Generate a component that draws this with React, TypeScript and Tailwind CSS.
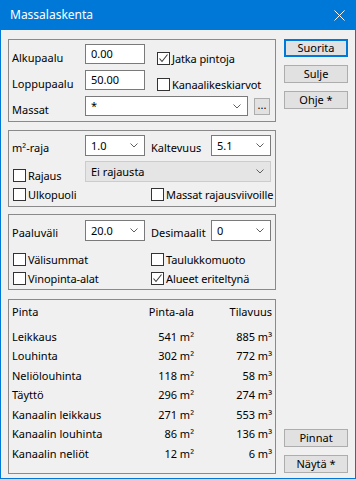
import React from "react";

const font = { fontFamily: '"Noto Sans", "Segoe UI", sans-serif' };

function Check({ checked = false }: { checked?: boolean }) {
  return (
    <span className="w-[13px] h-[13px] shrink-0 border border-[#333333] bg-white flex items-center justify-center">
      {checked && (
        <svg width="11" height="11" viewBox="0 0 11 11">
          <path d="M1.5 5.5 L4 8.5 L9.5 1.5" fill="none" stroke="#3c3c3c" strokeWidth="1.1" />
        </svg>
      )}
    </span>
  );
}

function CheckRow({ label, checked, w }: { label: string; checked?: boolean; w?: string }) {
  return (
    <div className={`flex items-center gap-[2px] h-[13px] whitespace-nowrap ${w ?? ""}`}>
      <Check checked={checked} />
      <span className="leading-[13px] tracking-[-0.1px]">{label}</span>
    </div>
  );
}

function Chevron() {
  return (
    <svg width="8" height="5" viewBox="0 0 8 5" className="shrink-0">
      <path d="M0.5 0.5 L4 4 L7.5 0.5" fill="none" stroke="#606060" strokeWidth="1" />
    </svg>
  );
}

function Combo({ value, w, disabled }: { value: string; w: string; disabled?: boolean }) {
  return (
    <div
      className={`${w} h-[21px] border flex items-center pl-[5px] pr-[6px] ${
        disabled ? "bg-[#e5e5e5] border-[#cccccc]" : "bg-white border-[#7a7a7a]"
      }`}
    >
      <span className="flex-1 leading-[14px]">{value}</span>
      <Chevron />
    </div>
  );
}

function Btn({ label, def }: { label: string; def?: boolean }) {
  return (
    <div
      className={`w-[64px] h-[18px] bg-[#e1e1e1] flex items-center justify-center leading-[14px] ${
        def ? "border-2 border-[#0078d7]" : "border border-[#adadad]"
      }`}
    >
      {label}
    </div>
  );
}

const rows: [string, string, string][] = [
  ["Leikkaus", "541 m²", "885 m³"],
  ["Louhinta", "302 m²", "772 m³"],
  ["Neliölouhinta", "118 m²", "58 m³"],
  ["Täyttö", "296 m²", "274 m³"],
  ["Kanaalin leikkaus", "271 m²", "553 m³"],
  ["Kanaalin louhinta", "86 m²", "136 m³"],
  ["Kanaalin neliöt", "12 m²", "6 m³"],
];

export default function App() {
  return (
    <div
      className="w-[356px] h-[479px] bg-[#0078d7] px-[1px] pb-[1px] flex flex-col text-[11px] text-black"
      style={font}
    >
      <div className="h-[30px] shrink-0 flex items-center justify-between pl-[9px] pr-[10px] text-white text-[12px]">
        <span>Massalaskenta</span>
        <svg width="11" height="11" viewBox="0 0 11 11">
          <path d="M0.5 0.5 L10.5 10.5 M10.5 0.5 L0.5 10.5" stroke="white" strokeWidth="1" />
        </svg>
      </div>

      <div className="flex-1 bg-[#f0f0f0] flex pl-[7px] pt-[9px] pb-[4px] pr-[7px] gap-[8px]">
        <div className="w-[268px] flex flex-col">
          {/* group 1 */}
          <div className="h-[83px] border border-[#8a8a8a] pt-[4px] pl-[3px] flex flex-col gap-[6px]">
            <div className="flex items-center h-[20px]">
              <span className="w-[73px] mt-[8px]">Alkupaalu</span>
              <div className="w-[60px] h-[20px] border border-[#7a7a7a] bg-white pl-[5px] leading-[17px]">0.00</div>
              <div className="ml-[12px] mt-[8px]">
                <CheckRow label="Jatka pintoja" checked />
              </div>
            </div>
            <div className="flex items-center h-[20px]">
              <span className="w-[73px] mt-[8px]">Loppupaalu</span>
              <div className="w-[60px] h-[20px] border border-[#7a7a7a] bg-white pl-[5px] leading-[17px]">50.00</div>
              <div className="ml-[12px] mt-[8px]">
                <CheckRow label="Kanaalikeskiarvot" />
              </div>
            </div>
            <div className="flex items-center h-[20px]">
              <span className="w-[73px] mt-[8px]">Massat</span>
              <div className="w-[163px] h-[20px] border border-[#7a7a7a] bg-white flex items-center pl-[5px] pr-[6px]">
                <span className="flex-1 leading-[14px]">*</span>
                <Chevron />
              </div>
              <div className="ml-[6px] w-[16px] h-[17px] border border-[#adadad] bg-[#e1e1e1] flex items-center justify-center leading-[10px] pb-[3px]">
                ...
              </div>
            </div>
          </div>

          {/* group 2 */}
          <div className="mt-[8px] h-[77px] border border-[#8a8a8a] pt-[4px] pl-[3px] flex flex-col">
            <div className="flex items-center h-[21px]">
              <span className="w-[73px] mt-[6px]">m²-raja</span>
              <Combo value="1.0" w="w-[60px]" />
              <span className="ml-[6px] w-[60px] mt-[6px]">Kaltevuus</span>
              <Combo value="5.1" w="w-[60px]" />
            </div>
            <div className="flex items-center h-[21px] mt-[5px]">
              <div className="w-[73px] pl-[1px] mt-[7px]">
                <CheckRow label="Rajaus" />
              </div>
              <Combo value="Ei rajausta" w="w-[186px]" disabled />
            </div>
            <div className="flex items-center h-[13px] mt-[6px]">
              <div className="w-[139px] pl-[1px]">
                <CheckRow label="Ulkopuoli" />
              </div>
              <CheckRow label="Massat rajausviivoille" />
            </div>
          </div>

          {/* group 3 */}
          <div className="mt-[7px] h-[76px] border border-[#8a8a8a] pt-[5px] pl-[3px] flex flex-col">
            <div className="flex items-center h-[21px]">
              <span className="w-[73px] mt-[6px]">Paaluväli</span>
              <Combo value="20.0" w="w-[60px]" />
              <span className="ml-[6px] w-[60px] mt-[6px]">Desimaalit</span>
              <Combo value="0" w="w-[60px]" />
            </div>
            <div className="flex items-center h-[13px] mt-[12px]">
              <div className="w-[139px] pl-[1px]">
                <CheckRow label="Välisummat" />
              </div>
              <CheckRow label="Taulukkomuoto" />
            </div>
            <div className="flex items-center h-[13px] mt-[6px]">
              <div className="w-[139px] pl-[1px]">
                <CheckRow label="Vinopinta-alat" />
              </div>
              <CheckRow label="Alueet eriteltynä" checked />
            </div>
          </div>

          {/* group 4 */}
          <div className="mt-[9px] h-[175px] border border-[#8a8a8a] pt-[2px] pl-[3px] pr-[3px]">
            <div className="grid grid-cols-[1fr_60px_78px] h-[20px] items-center">
              <span>Pinta</span>
              <span className="text-right">Pinta-ala</span>
              <span className="text-right">Tilavuus</span>
            </div>
            <div className="mt-[5px]">
              {rows.map(([n, a, v]) => (
                <div key={n} className="grid grid-cols-[1fr_60px_78px] h-[19.5px] items-center">
                  <span>{n}</span>
                  <span className="text-right">{a}</span>
                  <span className="text-right">{v}</span>
                </div>
              ))}
            </div>
          </div>
        </div>

        <div className="w-[64px] flex flex-col justify-between">
          <div className="flex flex-col gap-[8px]">
            <Btn label="Suorita" def />
            <Btn label="Sulje" />
            <Btn label="Ohje *" />
          </div>
          <div className="flex flex-col gap-[8px] pb-[1px]">
            <Btn label="Pinnat" />
            <Btn label="Näytä *" />
          </div>
        </div>
      </div>
    </div>
  );
}
